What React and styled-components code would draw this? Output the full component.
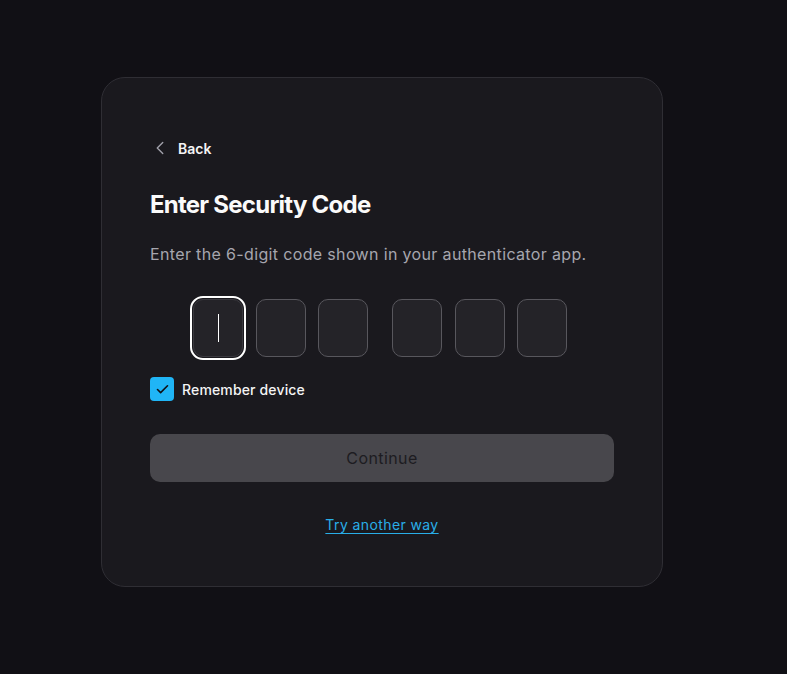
import React, { useState } from "react";
import styled, { createGlobalStyle } from "styled-components";
import { ChevronLeft, Check } from "lucide-react";

const GlobalStyle = createGlobalStyle`
    html, body {
        margin: 0;
        padding: 0;
        background-color: #111015;
        font-family: Inter, "Noto Sans", sans-serif;
    }
`;

const App = () => {
    const [remember, setRemember] = useState(true);
    const digits = ["", "", "", "", "", ""];

    return (
        <Page>
            <GlobalStyle />
            <Card>
                <BackButton>
                    <ChevronLeft size={22} strokeWidth={1.5} color="#a1a1aa" />
                    <BackText>Back</BackText>
                </BackButton>
                <Title>Enter Security Code</Title>
                <Subtitle>
                    Enter the 6-digit code shown in your authenticator app.
                </Subtitle>
                <OtpRow>
                    <OtpGroup>
                        {digits.slice(0, 3).map((d, i) => (
                            <OtpBox key={i} $focused={i === 0}>
                                {i === 0 ? <Caret /> : d}
                            </OtpBox>
                        ))}
                    </OtpGroup>
                    <OtpGroup>
                        {digits.slice(3).map((d, i) => (
                            <OtpBox key={i}>{d}</OtpBox>
                        ))}
                    </OtpGroup>
                </OtpRow>
                <RememberRow onClick={() => setRemember(!remember)}>
                    <CheckBox $checked={remember}>
                        {remember ? (
                            <Check size={15} strokeWidth={2.6} color="#111015" />
                        ) : null}
                    </CheckBox>
                    <RememberText>Remember device</RememberText>
                </RememberRow>
                <ContinueButton>Continue</ContinueButton>
                <LinkRow>
                    <AltLink href="#">Try another way</AltLink>
                </LinkRow>
            </Card>
        </Page>
    );
};

const Page = styled.div`
    min-height: 674px;
    box-sizing: border-box;
    padding: 77px 0 0 101px;
`;
const Card = styled.div`
    box-sizing: border-box;
    width: 562px;
    height: 510px;
    padding: 60px 48px 48px 48px;
    background-color: #1a191e;
    border: 1px solid #2f2e34;
    border-radius: 24px;
    display: flex;
    flex-direction: column;
`;
const BackButton = styled.div`
    display: flex;
    flex-direction: row;
    align-items: center;
    gap: 7px;
    height: 20px;
    margin-left: -1px;
    cursor: pointer;
`;
const BackText = styled.span`
    font-size: 14px;
    font-weight: 600;
    color: #f4f4f5;
`;
const Title = styled.h1`
    margin: 31px 0 0 0;
    font-size: 24px;
    line-height: 32px;
    font-weight: 700;
    letter-spacing: -0.75px;
    color: #fafafa;
`;
const Subtitle = styled.p`
    margin: 21px 0 0 0;
    font-size: 16px;
    line-height: 24px;
    letter-spacing: 0.35px;
    color: #a6a6ae;
`;
const OtpRow = styled.div`
    display: flex;
    flex-direction: row;
    justify-content: center;
    gap: 24px;
    margin-top: 33px;
    padding-right: 4px;
`;
const OtpGroup = styled.div`
    display: flex;
    flex-direction: row;
    gap: 12.5px;
`;
const OtpBox = styled.div`
    box-sizing: border-box;
    width: 50px;
    height: 58px;
    border-radius: 10px;
    background-color: #242328;
    border: 1px solid ${(p) => (p.$focused ? "#3a393f" : "#58575d")};
    outline: ${(p) => (p.$focused ? "2px solid #ffffff" : "none")};
    outline-offset: 1px;
    display: flex;
    align-items: center;
    justify-content: center;
`;
const Caret = styled.div`
    width: 1px;
    height: 28px;
    background-color: #ffffff;
`;
const RememberRow = styled.label`
    display: flex;
    flex-direction: row;
    align-items: center;
    gap: 8px;
    margin-top: 20px;
    cursor: pointer;
`;
const CheckBox = styled.div`
    width: 24px;
    height: 24px;
    border-radius: 4px;
    background-color: ${(p) => (p.$checked ? "#20b5f6" : "transparent")};
    border: ${(p) => (p.$checked ? "none" : "1px solid #58575d")};
    display: flex;
    align-items: center;
    justify-content: center;
`;
const RememberText = styled.span`
    font-size: 14px;
    font-weight: 500;
    letter-spacing: 0.15px;
    color: #f4f4f5;
`;
const ContinueButton = styled.button`
    margin-top: 33px;
    height: 48px;
    width: 100%;
    border: none;
    border-radius: 10px;
    background-color: #48474c;
    color: #1d1c21;
    font-family: Inter, "Noto Sans", sans-serif;
    font-size: 16px;
    font-weight: 400;
    letter-spacing: 0.4px;
`;
const LinkRow = styled.div`
    display: flex;
    justify-content: center;
    margin-top: 33px;
    line-height: 20px;
`;
const AltLink = styled.a`
    font-size: 14px;
    color: #29aee8;
    letter-spacing: 0.4px;
    text-decoration: underline;
    text-underline-offset: 3px;
`;

export default App;
